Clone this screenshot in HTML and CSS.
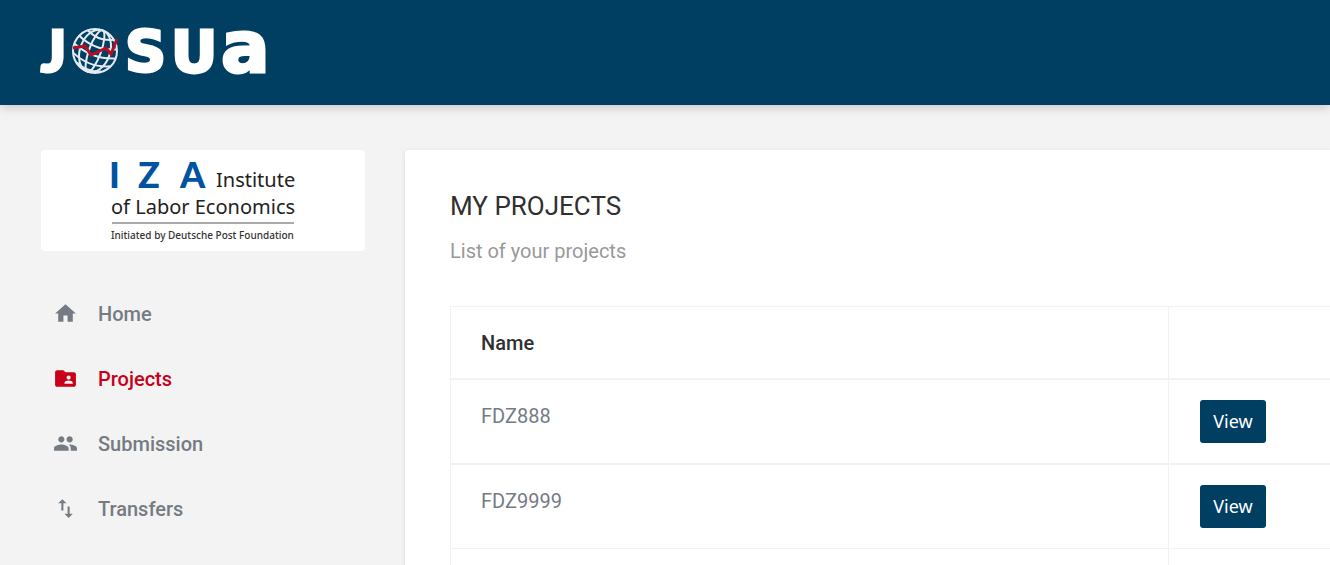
FILE: index.html
```html
<!DOCTYPE html>
<html lang="en">
<head>
  <meta charset="UTF-8">
  <meta name="viewport" content="width=device-width, initial-scale=1.0">
  <title>JOSUA - My Projects</title>
  <link rel="stylesheet" href="styles.css">
</head>
<body>
  <header class="topbar">
    <a href="#" class="brand" aria-label="JOSUA">
      <svg width="230" height="60" viewBox="0 0 230 60">
        <g class="brand-text">
          <text class="brand-j" x="1" y="51">J</text>
          <text class="brand-cap" x="85" y="51">S</text>
          <text class="brand-cap" x="131" y="51">U</text>
          <text class="brand-low" x="181" y="51">a</text>
        </g>
        <!-- globe -->
        <g class="globe" transform="translate(55 30)">
          <circle r="22"/>
          <g transform="rotate(20)">
            <ellipse rx="6" ry="22"/>
            <ellipse rx="15" ry="22"/>
            <path d="M-22 0Q0 9 22 0M-20-9Q0 0 20-9M-14-17Q0-10 14-17M-20 9Q0 18 20 9M-13 17Q0 23 13 17"/>
          </g>
        </g>
        <path class="globe-line" d="M33 27l12-2 6 9 15-7 5 6 6-15"/>
      </svg>
    </a>
  </header>

  <div class="layout">
    <!-- Sidebar -->
    <aside class="sidebar">
      <div class="logo-card">
        <svg width="190" height="86" viewBox="0 0 190 86">
          <g class="iza">
            <text x="1" y="30">I</text>
            <text x="30" y="30">Z</text>
            <text x="72" y="30">A</text>
          </g>
          <text class="iza-name" x="108" y="29">Institute</text>
          <text class="iza-name" x="3" y="56">of Labor Economics</text>
          <path class="iza-rule" d="M4 65h182"/>
          <text class="iza-small" x="3" y="81">Initiated by Deutsche Post Foundation</text>
        </svg>
      </div>

      <nav class="menu">
        <a href="#">
          <svg viewBox="0 0 24 24"><path d="M10 20v-6h4v6h5v-8h3L12 3 2 12h3v8z"/></svg>
          Home
        </a>
        <a href="#" class="active">
          <svg viewBox="0 0 24 24"><path d="M20 6h-8l-2-2H4c-1.100 0-1.990.9-1.990 2L2 18c0 1.100.9 2 2 2h16c1.100 0 2-.9 2-2V8c0-1.100-.9-2-2-2zm-5 3c1.100 0 2 .9 2 2s-.9 2-2 2-2-.9-2-2 .9-2 2-2zm4 8h-8v-1c0-1.330 2.670-2 4-2s4 .67 4 2v1z"/></svg>
          Projects
        </a>
        <a href="#">
          <svg viewBox="0 0 24 24"><path d="M16 11c1.660 0 2.990-1.340 2.990-3S17.660 5 16 5c-1.660 0-3 1.340-3 3s1.340 3 3 3zm-8 0c1.660 0 2.990-1.340 2.990-3S9.660 5 8 5C6.340 5 5 6.340 5 8s1.340 3 3 3zm0 2c-2.330 0-7 1.170-7 3.500V19h14v-2.500c0-2.330-4.670-3.500-7-3.500zm8 0c-.29 0-.62.02-.97.05 1.160.84 1.970 1.970 1.970 3.450V19h6v-2.500c0-2.330-4.670-3.500-7-3.500z"/></svg>
          Submission
        </a>
        <a href="#">
          <svg viewBox="0 0 24 24"><path d="M9 3L5 6.990h3V14h2V6.990h3L9 3zm7 14.010V10h-2v7.010h-3L15 21l4-3.990h-3z"/></svg>
          Transfers
        </a>
      </nav>
    </aside>

    <!-- Project list -->
    <main class="content">
      <h1>MY PROJECTS</h1>
      <p class="subtitle">List of your projects</p>

      <table>
        <thead>
          <tr>
            <th>Name</th>
            <th class="action"></th>
          </tr>
        </thead>
        <tbody>
          <tr>
            <td>FDZ888</td>
            <td class="action"><button type="button">View</button></td>
          </tr>
          <tr class="last">
            <td>FDZ9999</td>
            <td class="action"><button type="button">View</button></td>
          </tr>
          <tr>
            <td></td>
            <td class="action"></td>
          </tr>
        </tbody>
      </table>
    </main>
  </div>
</body>
</html>
```
FILE: styles.css
```css
* {
  box-sizing: border-box;
}
body {
  margin: 0;
  height: 100vh;
  display: flex;
  flex-direction: column;
  overflow: hidden;
  background: #f3f3f3;
  color: #757b83;
  font-family: Roboto, sans-serif;
  font-size: 20px;
  line-height: 30px;
}

/* header */
.topbar {
  flex: none;
  height: 105px;
  padding: 21px 40px;
  background: #003e62;
  box-shadow: 0 2px 10px rgba(0,0,0,0.2);
}
.brand svg {
  display: block;
  overflow: visible;
}
.brand-text {
  fill: #fff;
  stroke: #fff;
  stroke-width: 3;
  font-family: "DejaVu Sans", sans-serif;
  font-weight: 700;
}
.brand-j {
  font-family: Lato, sans-serif;
  font-size: 58px;
  font-weight: 900;
}
.brand-cap {
  font-size: 57px;
}
.brand-low {
  font-size: 72px;
}
.globe {
  fill: none;
  stroke: #e4ebf0;
  stroke-width: 2;
}
.globe-line {
  fill: none;
  stroke: #b50d25;
  stroke-width: 3;
}

.layout {
  flex: 1;
  display: flex;
  gap: 40px;
  padding: 45px 0 0 41px;
}

/* sidebar */
.sidebar {
  flex: none;
  width: 324px;
}
.logo-card {
  height: 101px;
  display: flex;
  align-items: center;
  justify-content: center;
  background: #fff;
  border-radius: 4px;
}
.logo-card svg {
  overflow: visible;
  font-family: "Noto Sans", sans-serif;
}
.iza {
  fill: #0053a1;
  font-family: Lato, sans-serif;
  font-size: 36px;
  font-weight: 900;
}
.iza-name {
  fill: #222;
  font-size: 20px;
}
.iza-small {
  fill: #333;
  font-size: 10px;
  font-weight: 500;
}
.iza-rule {
  stroke: #555;
}
.menu {
  margin-top: 30px;
}
.menu a {
  height: 65px;
  padding-left: 12px;
  display: flex;
  align-items: center;
  gap: 20px;
  color: #757b83;
  font-weight: 500;
  text-decoration: none;
}
.menu a.active {
  color: #c8001a;
}
.menu svg {
  width: 25px;
  height: 25px;
  fill: currentColor;
}

/* content */
.content {
  flex: 1;
  padding: 41px 0 0 45px;
  background: #fff;
  border-radius: 4px 0 0 0;
  box-shadow: 0 1px 4px rgba(0,0,0,0.1);
}
h1 {
  margin: 0;
  color: #303030;
  font-size: 26px;
  font-weight: 400;
  line-height: 30px;
}
.subtitle {
  margin: 15px 0 40px;
  color: #999;
}
table {
  width: 100%;
  border-collapse: separate;
  border-spacing: 0;
  border-top: 1px solid #f2f2f2;
}
th, td {
  padding: 21px 30px 20px;
  border-left: 1px solid #f2f2f2;
  border-bottom: 2px solid #f2f2f2;
  text-align: left;
  vertical-align: top;
}
th {
  height: 73px;
  color: #303030;
  font-weight: 500;
}
.action {
  width: 162px;
  padding: 20px 30px 20px 31px;
}
.last td {
  border-bottom-width: 1px;
}
button {
  display: block;
  width: 66px;
  height: 43px;
  padding: 0 0 2px;
  background: #003e62;
  color: #fff;
  border: none;
  border-radius: 3px;
  font-family: "Noto Sans", sans-serif;
  font-size: 18px;
  cursor: pointer;
}
```
